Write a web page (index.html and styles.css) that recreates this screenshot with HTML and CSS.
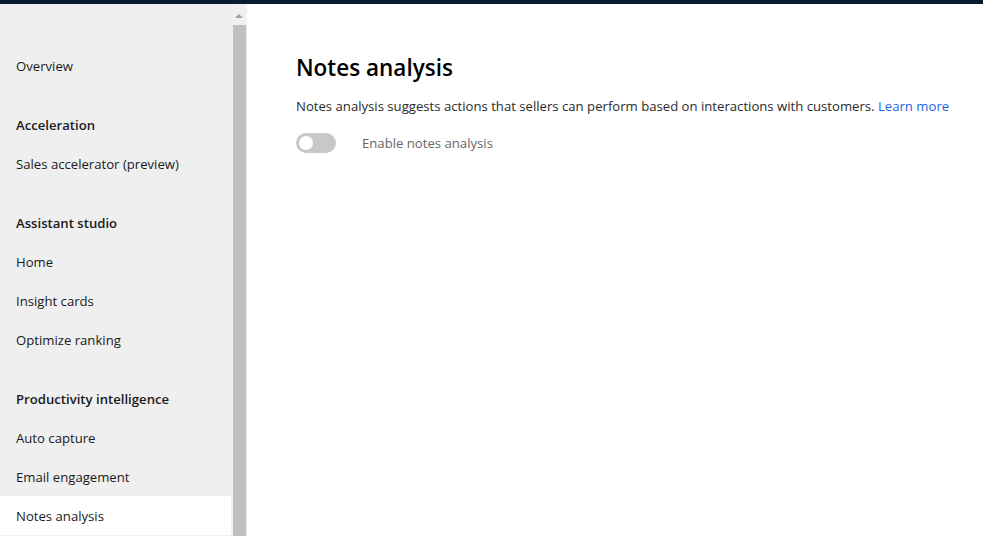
FILE: index.html
```html
<!DOCTYPE html>
<html lang="en">

<head>
    <meta charset="UTF-8">
    <meta name="viewport" content="width=device-width, initial-scale=1.0">
    <title>Notes analysis</title>
    <link rel="stylesheet" href="styles.css">
</head>

<body>
    <div class="topbar"></div>
    <div class="layout">
        <nav class="sidebar">
            <a class="nav-item" href="#">Overview</a>

            <div class="nav-group">Acceleration</div>
            <a class="nav-item" href="#">Sales accelerator (preview)</a>

            <div class="nav-group">Assistant studio</div>
            <a class="nav-item" href="#">Home</a>
            <a class="nav-item" href="#">Insight cards</a>
            <a class="nav-item" href="#">Optimize ranking</a>

            <div class="nav-group">Productivity intelligence</div>
            <a class="nav-item" href="#">Auto capture</a>
            <a class="nav-item" href="#">Email engagement</a>
            <a class="nav-item active" href="#">Notes analysis</a>
        </nav>
        <div class="scrollbar">
            <span class="scroll-arrow"></span>
            <div class="scroll-thumb"></div>
        </div>
        <main class="content">
            <h1>Notes analysis</h1>
            <p class="description">Notes analysis suggests actions that sellers can perform based on interactions with customers. <a href="#">Learn more</a></p>
            <div class="toggle-row">
                <span class="toggle"><span class="knob"></span></span>
                <span class="toggle-label">Enable notes analysis</span>
            </div>
        </main>
    </div>
</body>

</html>
```

FILE: styles.css
```css
body {
    margin: 0;
    font-family: "Segoe UI", "Open Sans", sans-serif;
    font-size: 13.15px;
    color: #1a1a1a;
    background-color: #ffffff;
    height: 536px;
    overflow: hidden;
    display: flex;
    flex-direction: column;
}

.topbar {
    height: 4px;
    background-color: #0b1a33;
}

.layout {
    flex: 1;
    display: flex;
    min-height: 0;
}

/* menu lateral */
.sidebar {
    width: 231px;
    background-color: #efefef;
    padding-top: 42px;
    display: flex;
    flex-direction: column;
}

.nav-item,
.nav-group {
    height: 39px;
    line-height: 41px;
    padding-left: 16px;
    color: #1a1a1a;
    text-decoration: none;
    white-space: nowrap;
    overflow: hidden;
}

.nav-group {
    margin-top: 20px;
    font-weight: 600;
}

.nav-item.active {
    background-color: #ffffff;
}

/* barra de rolagem falsa */
.scrollbar {
    width: 16px;
    background-color: #f0f0f0;
    display: flex;
    flex-direction: column;
    align-items: center;
}

.scroll-arrow {
    margin-top: 10px;
    width: 0;
    height: 0;
    border-left: 4px solid transparent;
    border-right: 4px solid transparent;
    border-bottom: 4px solid #a3a3a3;
}

.scroll-thumb {
    margin-top: 7px;
    width: 13px;
    flex: 1;
    background-color: #c1c1c1;
    margin-left: 1px;
}

.content {
    flex: 1;
    padding: 0 0 0 49px;
}

h1 {
    font-size: 22.5px;
    font-weight: 600;
    margin: 48px 0 0;
    line-height: 32px;
    color: #000;
}

.description {
    margin: 12px 0 0;
    line-height: 20px;
    color: #2b2b2b;
    white-space: nowrap;
}

.description a {
    color: #2266e3;
    text-decoration: none;
}

.toggle-row {
    display: flex;
    align-items: center;
    margin-top: 17px;
}

.toggle {
    width: 40px;
    height: 20px;
    border-radius: 10px;
    background-color: #c8c8c8;
    display: flex;
    align-items: center;
    padding-left: 3px;
    box-sizing: border-box;
}

.knob {
    width: 14px;
    height: 14px;
    border-radius: 50%;
    background-color: #ffffff;
}

.toggle-label {
    margin-left: 26px;
    color: #666666;
}
```
